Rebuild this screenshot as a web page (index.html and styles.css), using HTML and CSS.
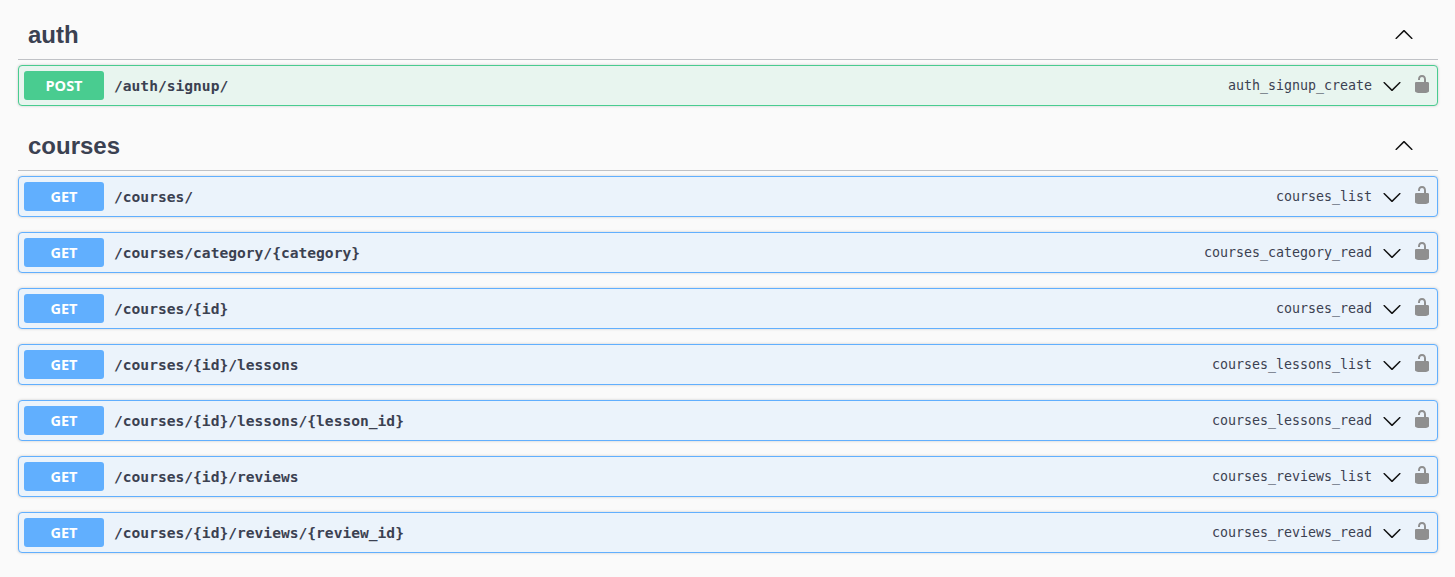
FILE: index.html
```html
<!DOCTYPE html>
<html lang="en">
<head>
    <meta charset="UTF-8">
    <meta name="viewport" content="width=device-width, initial-scale=1.0">
    <title>API docs</title>
    <link rel="stylesheet" href="styles.css">
</head>
<body>
    <svg class="sprites" width="0" height="0">
        <symbol id="arrow-down" viewBox="0 0 20 20">
            <path d="M17.418 6.109c.272-.268.709-.268.979 0s.271.701 0 .969l-7.908 7.83c-.27.268-.707.268-.979 0l-7.908-7.83c-.27-.268-.27-.701 0-.969.271-.268.709-.268.979 0L10 13.25l7.418-7.141z"/>
        </symbol>
        <symbol id="arrow-up" viewBox="0 0 20 20">
            <path d="M2.582 13.891c-.272.268-.709.268-.979 0s-.271-.701 0-.969l7.908-7.83c.27-.268.707-.268.979 0l7.908 7.83c.27.268.27.701 0 .969-.271.268-.709.268-.978 0L10 6.75l-7.418 7.141z"/>
        </symbol>
        <symbol id="lock" viewBox="0 0 20 20">
            <path d="M15.8 8H14V5.6C14 2.703 12.665 1 10 1 7.334 1 6 2.703 6 5.6V6h2v-.801C8 3.754 8.797 3 10 3c1.203 0 2 .754 2 2.199V8H4c-.553 0-1 .646-1 1.199V17c0 .549.428 1.139.951 1.307l1.197.387C5.672 18.861 6.55 19 7.1 19h5.8c.549 0 1.428-.139 1.951-.307l1.196-.387c.524-.167.953-.757.953-1.306V9.199C17 8.646 16.352 8 15.8 8z"/>
        </symbol>
    </svg>

    <section class="tag-section">
        <div class="tag-head">
            <h3>auth</h3>
            <svg class="tag-arrow"><use href="#arrow-up"/></svg>
        </div>
        <div class="op op-post">
            <span class="method">POST</span>
            <span class="path">/auth/signup/</span>
            <span class="op-id">auth_signup_create</span>
            <svg class="op-arrow"><use href="#arrow-down"/></svg>
            <svg class="op-lock"><use href="#lock"/></svg>
        </div>
    </section>

    <section class="tag-section">
        <div class="tag-head">
            <h3>courses</h3>
            <svg class="tag-arrow"><use href="#arrow-up"/></svg>
        </div>
        <div class="op op-get">
            <span class="method">GET</span>
            <span class="path">/courses/</span>
            <span class="op-id">courses_list</span>
            <svg class="op-arrow"><use href="#arrow-down"/></svg>
            <svg class="op-lock"><use href="#lock"/></svg>
        </div>
        <div class="op op-get">
            <span class="method">GET</span>
            <span class="path">/courses/category/{category}</span>
            <span class="op-id">courses_category_read</span>
            <svg class="op-arrow"><use href="#arrow-down"/></svg>
            <svg class="op-lock"><use href="#lock"/></svg>
        </div>
        <div class="op op-get">
            <span class="method">GET</span>
            <span class="path">/courses/{id}</span>
            <span class="op-id">courses_read</span>
            <svg class="op-arrow"><use href="#arrow-down"/></svg>
            <svg class="op-lock"><use href="#lock"/></svg>
        </div>
        <div class="op op-get">
            <span class="method">GET</span>
            <span class="path">/courses/{id}/lessons</span>
            <span class="op-id">courses_lessons_list</span>
            <svg class="op-arrow"><use href="#arrow-down"/></svg>
            <svg class="op-lock"><use href="#lock"/></svg>
        </div>
        <div class="op op-get">
            <span class="method">GET</span>
            <span class="path">/courses/{id}/lessons/{lesson_id}</span>
            <span class="op-id">courses_lessons_read</span>
            <svg class="op-arrow"><use href="#arrow-down"/></svg>
            <svg class="op-lock"><use href="#lock"/></svg>
        </div>
        <div class="op op-get">
            <span class="method">GET</span>
            <span class="path">/courses/{id}/reviews</span>
            <span class="op-id">courses_reviews_list</span>
            <svg class="op-arrow"><use href="#arrow-down"/></svg>
            <svg class="op-lock"><use href="#lock"/></svg>
        </div>
        <div class="op op-get">
            <span class="method">GET</span>
            <span class="path">/courses/{id}/reviews/{review_id}</span>
            <span class="op-id">courses_reviews_read</span>
            <svg class="op-arrow"><use href="#arrow-down"/></svg>
            <svg class="op-lock"><use href="#lock"/></svg>
        </div>
    </section>
</body>
</html>
```

FILE: styles.css
```css
body {
    margin: 0;
    padding: 10px 17px 0 18px;
    background: #fafafa;
    color: #3b4151;
    font-family: "Liberation Sans", Arial, sans-serif;
}
.sprites { position: absolute; }

.tag-head {
    display: flex;
    align-items: center;
    justify-content: space-between;
    height: 49px;
    margin-bottom: 5px;
    padding: 0 24px 0 10px;
    border-bottom: 1px solid rgba(59, 65, 81, 0.3);
}
.tag-head h3 {
    margin: 0;
    font-size: 24px;
    font-weight: bold;
}
.tag-arrow {
    width: 20px;
    height: 20px;
    fill: #111;
}

.op {
    display: flex;
    align-items: center;
    box-sizing: border-box;
    height: 41px;
    margin-bottom: 15px;
    padding: 0 5px;
    border: 1px solid;
    border-radius: 4px;
    box-shadow: 0 0 3px rgba(0, 0, 0, 0.19);
}
.op-post { background: #e8f5ef; border-color: #49cc90; }
.op-get { background: #ebf3fb; border-color: #61affe; }

.method {
    width: 80px;
    height: 29px;
    line-height: 29px;
    border-radius: 3px;
    color: #fff;
    font-family: "Open Sans", sans-serif;
    font-size: 14.5px;
    font-weight: 700;
    text-align: center;
}
.op-post .method { background: #49cc90; }
.op-get .method { background: #61affe; }

.path {
    flex: 1;
    padding-left: 10px;
    font-family: "DejaVu Sans Mono", monospace;
    font-size: 14.6px;
    font-weight: bold;
}
.op-id {
    font-family: "DejaVu Sans Mono", monospace;
    font-size: 13.3px;
}
.op-arrow {
    width: 20px;
    height: 20px;
    margin-left: 10px;
    fill: #111;
}
.op-lock {
    width: 20px;
    height: 20px;
    margin: -4px 0 0 10px;
    fill: #8f8f8f;
}
```
